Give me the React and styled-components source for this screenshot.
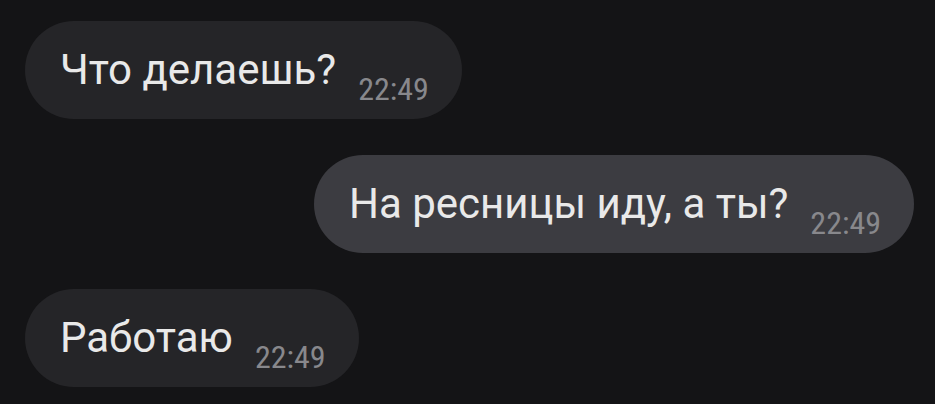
import React from "react"
import styled, { createGlobalStyle } from "styled-components";

const Global = createGlobalStyle`
  html, body {
    margin: 0;
    padding: 0;
    background: #141416;
  }
  body {
    font-family: Roboto, "Noto Sans", "Liberation Sans", sans-serif;
  }
`

const messages = [
  { id: 1, text: "Что делаешь?", time: "22:49", mine: false },
  { id: 2, text: "На ресницы иду, а ты?", time: "22:49", mine: true },
  { id: 3, text: "Работаю", time: "22:49", mine: false },
]

function App() {
  return (
    <>
      <Global />
      <Chat>
        {messages.map((m) => (
          <Row key={m.id} $mine={m.mine}>
            <Bubble $mine={m.mine}>
              <Text>{m.text}</Text>
              <Time>{m.time}</Time>
            </Bubble>
          </Row>
        ))}
      </Chat>
    </>
  );
}

const Chat = styled.main`
  width: 935px;
  height: 404px;
  box-sizing: border-box;
  padding: 21px 21px 0 25px;
  display: flex;
  flex-direction: column;
  gap: 36px;
  overflow: hidden;
`

const Row = styled.div`
  display: flex;
  justify-content: ${(p) => (p.$mine ? "flex-end" : "flex-start")};
`

const Bubble = styled.div`
  display: flex;
  align-items: flex-end;
  gap: 22px;
  height: 98px;
  box-sizing: border-box;
  padding: 25px 33px 14px 35px;
  border-radius: 49px;
  background: ${(p) => (p.$mine ? "#3c3c41" : "#252528")};
`

const Text = styled.span`
  font-size: 42px;
  line-height: 48px;
  color: #e9e9e9;
  margin-bottom: 11px;
  white-space: nowrap;
`

const Time = styled.span`
  font-family: "Roboto Condensed", Roboto, sans-serif;
  font-size: 32px;
  line-height: 32px;
  color: #88888c;
  white-space: nowrap;
`

export default App;
